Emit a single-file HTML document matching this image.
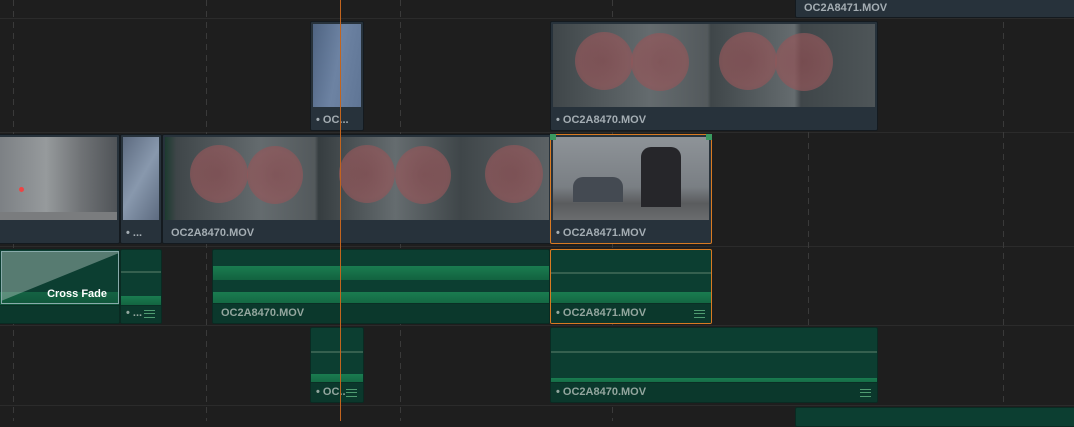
<!DOCTYPE html>
<html><head><style>
*{margin:0;padding:0;box-sizing:border-box}
body{width:1074px;height:421px;background:#1e1e1e;position:relative;overflow:hidden;font-family:"Liberation Sans",sans-serif;font-weight:bold;}
.a{position:absolute}
.hl{position:absolute;left:0;width:1074px;height:1px;background:#2b2b2b}
.vd{position:absolute;top:0;width:1px;height:421px;background:repeating-linear-gradient(#3a3a3a 0 6px,transparent 6px 11px)}
.v{position:absolute;background:#27323b;border:1px solid #141a1f;border-radius:2px}
.th{position:absolute;left:2px;right:2px;top:2px;bottom:23px;overflow:hidden;background:#5b6366}
.lb{position:absolute;left:5px;bottom:4px;font-size:11px;color:#a4adb3;white-space:nowrap}
.au{position:absolute;background:#0c3e31;border:1px solid #0a2a22;border-radius:2px;overflow:hidden}
.au .ln{position:absolute;left:0;right:0;height:2px;background:#35604f}
.au .bar{position:absolute;left:0;right:0;bottom:0;height:20px;background:#0b382c;border-top:1px solid #0a2f25}
.au .lb{color:#93a69e}
.wf{position:absolute;left:0;right:0;background:linear-gradient(#1a7c50,#12623f)}
.rc{position:absolute;border-radius:50%;background:radial-gradient(circle,#8e4f53 0%,#94575a 60%,#7f5559 100%);opacity:.7}
.menu{position:absolute;right:6px;bottom:5px;width:11px;height:8px;border-top:1px solid #8ea;border-bottom:1px solid #8ea;opacity:.55}
.menu:after{content:"";position:absolute;left:0;right:0;top:2px;height:1px;background:#8ea}
</style></head><body>
<div class="hl" style="top:18px"></div>
<div class="hl" style="top:132px"></div>
<div class="hl" style="top:246px"></div>
<div class="hl" style="top:325px"></div>
<div class="hl" style="top:405px"></div>
<div class="vd" style="left:13px"></div>
<div class="vd" style="left:206px"></div>
<div class="vd" style="left:400px"></div>
<div class="vd" style="left:612px"></div>
<div class="vd" style="left:808px"></div>
<div class="vd" style="left:1003px"></div>

<div class="v" style="left:795px;top:-2px;width:282px;height:20px"><div class="lb" style="left:8px;bottom:3px">OC2A8471.MOV</div></div>

<div class="v" style="left:310px;top:21px;width:54px;height:110px">
 <div class="th" style="background:linear-gradient(100deg,#4f6482,#6d83a3 50%,#5f7595)"></div>
 <div class="lb">• OC...</div></div>
<div class="v" style="left:550px;top:21px;width:328px;height:110px">
 <div class="th" style="background:linear-gradient(90deg,#3f4649,#646b6e 30%,#53595c 48%,#3f4649 49%,#656c6f 75%,#3f4649 77%,#4e5558)">
  <div class="rc" style="left:22px;top:8px;width:58px;height:58px"></div>
  <div class="rc" style="left:78px;top:9px;width:58px;height:58px"></div>
  <div class="rc" style="left:166px;top:8px;width:58px;height:58px"></div>
  <div class="rc" style="left:222px;top:9px;width:58px;height:58px"></div>
 </div>
 <div class="lb">• OC2A8470.MOV</div></div>

<div class="v" style="left:-4px;top:134px;width:124px;height:110px">
 <div class="th" style="background:linear-gradient(90deg,#7c8084,#969a9c 40%,#6f7275 70%,#505458)"><div class="a" style="left:0;bottom:0;width:120px;height:8px;background:#7a7c7e"></div><div class="a" style="left:20px;top:50px;width:5px;height:5px;border-radius:50%;background:#e44"></div></div></div>
<div class="v" style="left:120px;top:134px;width:42px;height:110px">
 <div class="th" style="background:linear-gradient(120deg,#5d6b80,#8898ad 50%,#5d6b80)"></div>
 <div class="lb">• ...</div></div>
<div class="v" style="left:162px;top:134px;width:390px;height:110px">
 <div class="th" style="background:linear-gradient(90deg,#1d3b30 0,#3f4649 3%,#646b6e 25%,#53595c 39%,#363d40 40%,#656c6f 60%,#3f4649 77%,#5c6265)">
  <div class="rc" style="left:25px;top:8px;width:58px;height:58px"></div>
  <div class="rc" style="left:82px;top:9px;width:56px;height:58px"></div>
  <div class="rc" style="left:174px;top:8px;width:56px;height:58px"></div>
  <div class="rc" style="left:230px;top:9px;width:56px;height:58px"></div>
  <div class="rc" style="left:320px;top:8px;width:58px;height:58px"></div>
 </div>
 <div class="lb" style="left:8px">OC2A8470.MOV</div></div>
<div class="v" style="left:550px;top:134px;width:162px;height:110px;border:1px solid #d87a22">
 <div class="th" style="background:linear-gradient(180deg,#8e9398,#7a7f84 60%,#5a5c5e 80%,#6a6c6e)">
  <div class="a" style="left:88px;top:10px;width:40px;height:60px;background:#26262a;border-radius:10px 10px 0 0"></div>
  <div class="a" style="left:20px;top:40px;width:50px;height:25px;background:#444a52;border-radius:10px 10px 0 0"></div>
 </div>
 <div class="a" style="left:-1px;top:-1px;width:6px;height:6px;background:#3a9a60"></div>
 <div class="a" style="right:-1px;top:-1px;width:6px;height:6px;background:#3a9a60"></div>
 <div class="lb">• OC2A8471.MOV</div></div>

<div class="au" style="left:-4px;top:249px;width:124px;height:75px">
 <div class="wf" style="top:42px;height:14px;opacity:.6"></div>
 <svg class="a" style="left:4px;top:1px" width="118" height="53"><polygon points="0,0 118,0 118,2 0,50" fill="rgba(180,198,192,.45)"/><rect x="0.5" y="0.5" width="117" height="52" fill="none" stroke="#8aa"/></svg>
 <div class="a" style="right:12px;top:38px;font-size:11px;color:#fff">Cross Fade</div>
 <div class="bar" style="height:18px"></div></div>
<div class="au" style="left:120px;top:249px;width:42px;height:75px">
 <div class="ln" style="top:21px"></div><div class="wf" style="top:46px;height:10px"></div>
 <div class="bar" style="height:18px"></div><div class="lb">• ...</div><div class="menu"></div></div>
<div class="au" style="left:212px;top:249px;width:338px;height:75px">
 <div class="ln" style="top:23px"></div>
 <div class="wf" style="top:16px;height:14px"></div>
 <div class="wf" style="top:42px;height:15px"></div>
 <div class="bar"></div><div class="lb" style="left:8px">OC2A8470.MOV</div></div>
<div class="au" style="left:550px;top:249px;width:162px;height:75px;border:1px solid #d87a22">
 <div class="ln" style="top:22px"></div><div class="wf" style="top:42px;height:14px"></div>
 <div class="bar"></div><div class="lb">• OC2A8471.MOV</div><div class="menu"></div></div>

<div class="au" style="left:310px;top:327px;width:54px;height:76px">
 <div class="ln" style="top:23px"></div><div class="wf" style="top:46px;height:12px"></div>
 <div class="bar"></div><div class="lb">• OC..</div><div class="menu"></div></div>
<div class="au" style="left:550px;top:327px;width:328px;height:76px">
 <div class="ln" style="top:23px"></div><div class="wf" style="top:50px;height:7px"></div>
 <div class="bar"></div><div class="lb">• OC2A8470.MOV</div><div class="menu"></div></div>

<div class="au" style="left:795px;top:407px;width:282px;height:20px"></div>

<div class="a" style="left:340px;top:0;width:1px;height:421px;background:#c2641e"></div>
</body></html>
